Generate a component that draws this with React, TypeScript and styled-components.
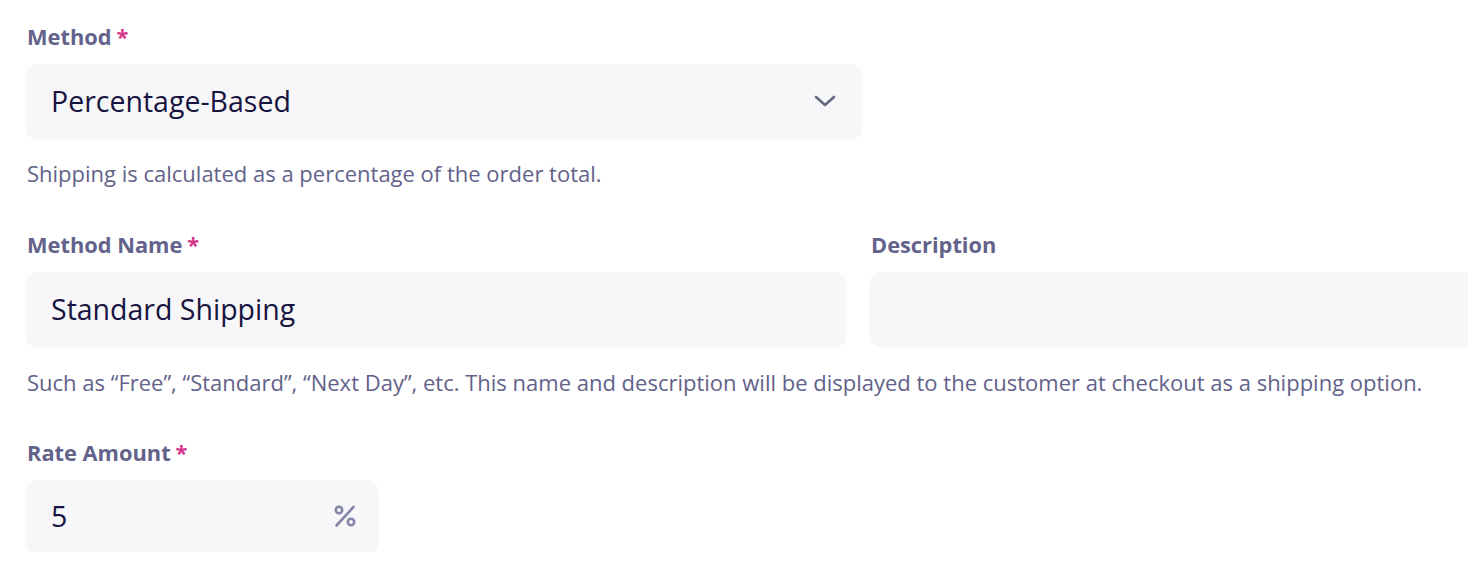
import React from "react";
import styled, { createGlobalStyle } from "styled-components";

const Global = createGlobalStyle`
  html, body { margin: 0; padding: 0; background: #ffffff; }
  body { font-family: "Open Sans", "Noto Sans", sans-serif; overflow: hidden; }
`;

const Page = styled.div`
  padding: 22px 0 0 26px;
  width: 1700px;
  display: flex;
  flex-direction: column;
`;

const Field = styled.div`
  display: flex;
  flex-direction: column;
`;

const Label = styled.label`
  font-size: 21.8px;
  font-weight: 700;
  color: #62628a;
  line-height: 30px;
  margin-bottom: 12px;
  padding-left: 1px;
`;

const Required = styled.span`
  color: #d6348a;
  margin-left: 5px;
`;

const Box = styled.div<{ $width: string; $height?: number }>`
  width: ${(p) => p.$width};
  height: ${(p) => p.$height || 73}px;
  box-sizing: border-box;
  background: #f7f7f9;
  border-radius: 12px;
  box-shadow: 0 2px 3px rgba(30, 30, 70, 0.06);
  display: flex;
  align-items: center;
  justify-content: space-between;
  padding: 0 26px 0 25px;
`;

const Value = styled.span`
  font-size: 28.5px;
  font-weight: 500;
  color: #17153f;
`;

const Help = styled.p<{ $top: number }>`
  margin: ${(p) => p.$top}px 0 0 1px;
  font-size: 22px;
  color: #62628a;
  line-height: 30px;
`;

const Row = styled.div`
  display: flex;
  gap: 24px;
  margin-top: 42px;
`;

const Section = styled.div`
  margin-top: 41px;
`;

const SuffixIcon = styled.svg`
  display: block;
  margin-right: -5px;
`;

const Chevron = () => (
  <svg width="22" height="14" viewBox="0 0 22 14" fill="none">
    <path d="M2 3l9 8 9-8" stroke="#62687d" strokeWidth="2.6" strokeLinecap="round" strokeLinejoin="round" />
  </svg>
);

const PercentIcon = () => (
  <SuffixIcon width="24" height="24" viewBox="0 0 24 24" fill="none" stroke="#8585a8" strokeWidth="2.6" strokeLinecap="round">
    <circle cx="6" cy="6" r="3.2" />
    <circle cx="18" cy="18" r="3.2" />
    <path d="M3.5 21.5L20.5 3" />
  </SuffixIcon>
);

export default function App() {
  return (
    <>
      <Global />
      <Page>
        <Field>
          <Label>
            Method<Required>*</Required>
          </Label>
          <Box $width="836px">
            <Value>Percentage-Based</Value>
            <Chevron />
          </Box>
        </Field>
        <Help $top={21}>Shipping is calculated as a percentage of the order total.</Help>
        <Row>
          <Field>
            <Label>
              Method Name<Required>*</Required>
            </Label>
            <Box $width="820px">
              <Value>Standard Shipping</Value>
            </Box>
          </Field>
          <Field>
            <Label>Description</Label>
            <Box $width="820px" />
          </Field>
        </Row>
        <Help $top={22}>
          Such as “Free”, “Standard”, “Next Day”, etc. This name and description will be displayed to the customer at checkout as a shipping option.
        </Help>
        <Section>
          <Field>
            <Label>
              Rate Amount<Required>*</Required>
            </Label>
            <Box $width="352px" $height={72}>
              <Value>5</Value>
              <PercentIcon />
            </Box>
          </Field>
        </Section>
      </Page>
    </>
  );
}
